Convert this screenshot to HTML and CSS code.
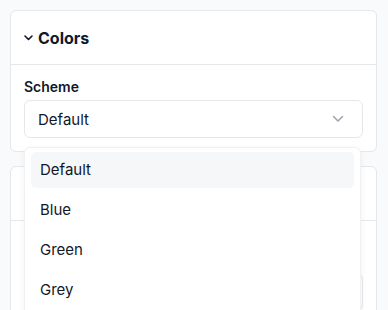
FILE: index.html
```html
<!DOCTYPE html>
<html lang="en">
<head>
    <meta charset="UTF-8">
    <meta name="viewport" content="width=device-width, initial-scale=1.0">
    <title>Settings</title>
    <link rel="stylesheet" href="styles.css">
</head>
<body>
    <section class="card">
        <header class="card-header">
            <svg class="toggle" width="9" height="6" viewBox="0 0 9 6"><path d="M1 1l3.5 3.5L8 1" fill="none" stroke="#111827" stroke-width="1.6" stroke-linecap="round" stroke-linejoin="round"/></svg>
            <h2>Colors</h2>
        </header>
        <div class="card-body">
            <label class="field-label">Scheme</label>
            <div class="select-wrap">
                <div class="select">
                    <span>Default</span>
                    <svg width="12" height="8" viewBox="0 0 12 8"><path d="M1.5 1.5L6 6l4.5-4.5" fill="none" stroke="#9ca3af" stroke-width="1.5" stroke-linecap="round" stroke-linejoin="round"/></svg>
                </div>
                <ul class="menu">
                    <li class="active">Default</li>
                    <li>Blue</li>
                    <li>Green</li>
                    <li>Grey</li>
                </ul>
            </div>
        </div>
    </section>

    <section class="card">
        <header class="card-header"></header>
        <div class="card-body second">
            <div class="input"></div>
        </div>
    </section>
</body>
</html>
```
FILE: styles.css
```css
body {
    margin: 0;
    padding: 10px 11px 10px 10px;
    background: #f9fafb;
    font-family: Inter, "Noto Sans", sans-serif;
    color: #111827;
}
.card {
    background: #fff;
    border: 1px solid #e5e7eb;
    border-radius: 6px;
    margin-bottom: 14px;
}
.card-header {
    display: flex;
    align-items: center;
    gap: 5px;
    height: 53px;
    padding: 0 13px;
    border-bottom: 1px solid #e5e7eb;
}
.card-header h2 {
    margin: 0;
    font-size: 16px;
    font-weight: 700;
    line-height: 20px;
}
.toggle { margin-top: 1px; }
.card-body {
    padding: 12px 13px 13px;
}
.field-label {
    display: block;
    font-size: 14px;
    font-weight: 600;
    line-height: 20px;
    margin-bottom: 3px;
}
.select-wrap { position: relative; }
.select {
    display: flex;
    align-items: center;
    justify-content: space-between;
    height: 36px;
    padding: 0 18px 0 13px;
    border: 1px solid #e5e7eb;
    border-radius: 6px;
    font-size: 15px;
}
.menu {
    position: absolute;
    top: 47px;
    left: 0;
    right: 2px;
    margin: 0;
    padding: 4px 6px;
    list-style: none;
    background: #fff;
    border: 1px solid #f0f1f3;
    border-radius: 6px;
    box-shadow: 0 2px 6px rgba(17, 24, 39, 0.06);
    z-index: 2;
}
.menu li {
    height: 36px;
    line-height: 36px;
    padding: 0 9px;
    margin-bottom: 4px;
    font-size: 15px;
    border-radius: 5px;
}
.menu li.active { background: #f6f7f9; }
.second { padding-top: 52px; }
.input {
    height: 36px;
    border: 1px solid #e5e7eb;
    border-radius: 6px;
}
```
